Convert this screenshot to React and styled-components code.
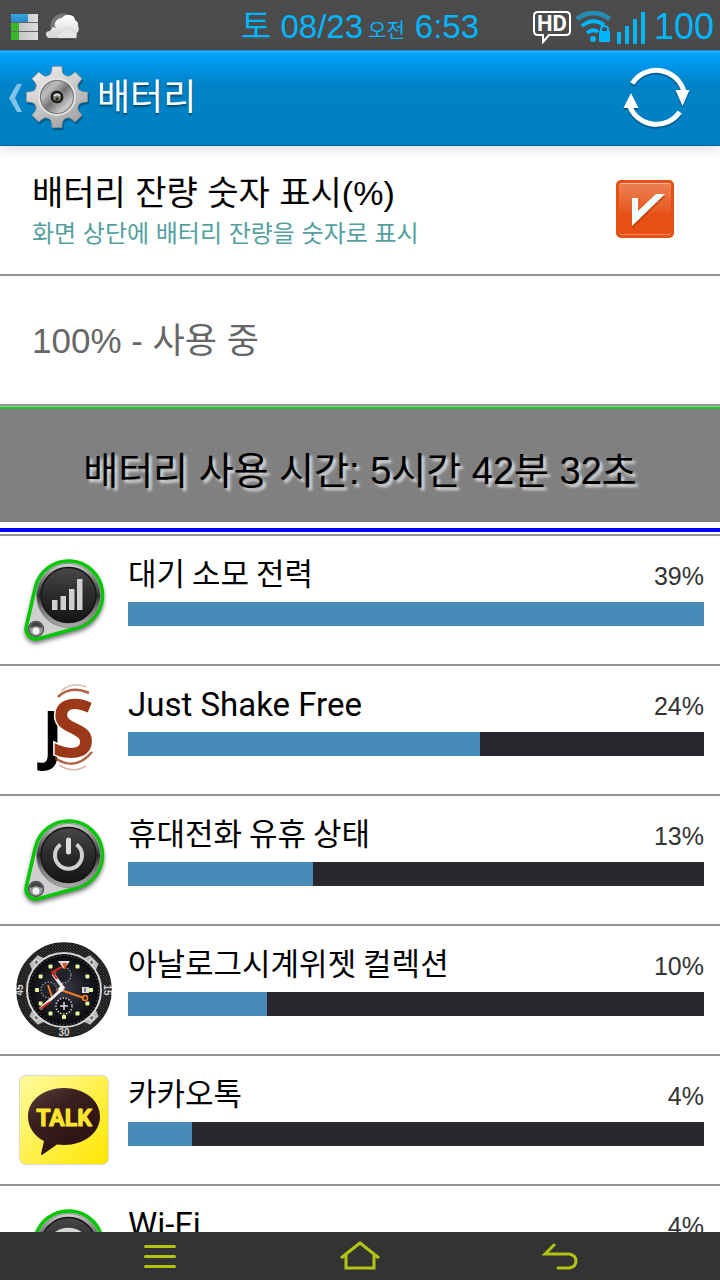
import React, { useState } from "react";
import styled, { createGlobalStyle } from "styled-components";

const HANGUL = '"Noto Sans CJK KR", sans-serif';

const GlobalStyle = createGlobalStyle`
  *, *::before, *::after { box-sizing: border-box; }
  html, body, #root { height: 100%; }
  body {
    margin: 0;
    background: #fff;
    color: #000;
    font-family: "Liberation Sans", ${HANGUL};
  }
`;

const Screen = styled.div`
  display: flex;
  flex-direction: column;
  height: 100vh;
  overflow: hidden;
`;

/* ---------- status bar ---------- */

const StatusBar = styled.header`
  flex: none;
  display: grid;
  grid-template-columns: 1fr auto 1fr;
  align-items: center;
  height: 50px;
  padding: 0 6px;
  background: #4b4b4b;
  color: #00b7ff;
`;

const StatusGroup = styled.div`
  display: flex;
  align-items: center;
  justify-content: ${(p) => (p.$end ? "flex-end" : "flex-start")};
  gap: ${(p) => (p.$end ? "5px" : "8px")};
  padding-left: 4px;
`;

const Clock = styled.time`
  display: flex;
  align-items: baseline;
  padding-top: 4px;
  font-size: 33px;
  line-height: 46px;
  white-space: pre;
`;

const Meridiem = styled.span`
  margin: 0 10px 0 5px;
  font-size: 20px;
`;

const BatteryLevel = styled.span`
  margin-left: 3px;
  font-size: 36px;
  line-height: 50px;
`;

/* ---------- app bar ---------- */

const AppBar = styled.div`
  flex: none;
  position: relative;
  z-index: 1;
  display: flex;
  align-items: center;
  justify-content: space-between;
  height: 96px;
  padding: 0 28px 0 7px;
  border-top: 1px solid #1b8ed2;
  border-bottom: 1px solid #00679f;
  background: linear-gradient(#2fb4ff 0, #00a0fa 3px, #0098ee 12px, #0082c6 34px, #0080c3 100%);
  box-shadow: 0 2px 12px rgba(0, 0, 0, 0.16);
`;

const IconButton = styled.button`
  display: flex;
  align-items: center;
  justify-content: center;
  flex: ${(p) => (p.$grow ? 1 : "none")};
  gap: 2px;
  height: 100%;
  padding: 0;
  border: 0;
  background: none;
`;

const TitleGroup = styled.div`
  display: flex;
  align-items: center;
  gap: 6px;
  height: 100%;
`;

const Title = styled.h1`
  margin: 0;
  color: #fff;
  font-family: "Liberation Sans", ${HANGUL};
  font-size: 36px;
  font-weight: 400;
  line-height: 48px;
  text-shadow: 0 2px 2px rgba(0, 0, 0, 0.45);
`;

/* ---------- settings ---------- */

const Content = styled.main`
  flex: 1;
  min-height: 0;
  overflow-y: auto;
  scrollbar-width: none;
`;

const SettingRow = styled.label`
  display: flex;
  align-items: center;
  justify-content: space-between;
  height: 130px;
  padding: 0 46px 2px 32px;
  border-bottom: 2px solid #969496;
`;

const SettingText = styled.span`
  padding-top: 4px;
`;

const SettingTitle = styled.span`
  display: block;
  font-size: 34px;
  line-height: 46px;
`;

const SettingHint = styled.span`
  display: block;
  color: #54a0a0;
  font-size: 24px;
  line-height: 36px;
`;

const StateText = styled.p`
  margin: 0;
  padding-top: 4px;
  color: #666;
  font-size: 35px;
  line-height: 48px;
`;

const CheckFrame = styled.span`
  display: grid;
  flex: none;
  > * { grid-area: 1 / 1; }
  > svg { pointer-events: none; }
`;

const CheckInput = styled.input`
  appearance: none;
  width: 58px;
  height: 58px;
  margin: 0;
  border: 3px solid #e65014;
  border-radius: 5px;
  background: linear-gradient(#ec8154, #e65a20 55%, #e65014 60%);
  box-shadow: inset 0 1px 0 #f6b99e, inset 0 -1px 0 #f08e64;
`;

const Banner = styled.section`
  padding-bottom: 6px;
  border-bottom: 4px solid #0000fa;
  background: #fff;
`;

const BannerText = styled.p`
  display: flex;
  align-items: center;
  justify-content: center;
  height: 116px;
  margin: 0;
  padding-top: 14px;
  background: linear-gradient(#6cf06c 0 1px, #38bc38 1px 3px, #808080 3px);
  font-size: 38px;
  line-height: 48px;
  text-shadow: 3px 3px 3px #e0e0e0;
`;

/* ---------- usage list ---------- */

const UsageList = styled.ul`
  margin: 2px 0 0;
  padding: 0;
  border-top: 2px solid #969496;
  list-style: none;
`;

const UsageRow = styled.li`
  display: flex;
  gap: 16px;
  height: 130px;
  padding: 16px;
  border-bottom: 2px solid #969496;
`;

const UsageBody = styled.div`
  flex: 1;
  min-width: 0;
`;

const UsageHeader = styled.div`
  display: flex;
  align-items: flex-start;
  justify-content: space-between;
  height: 44px;
  margin-bottom: 6px;
`;

const UsageName = styled.span`
  font-family: ${(p) => (p.$latin ? "Roboto, sans-serif" : HANGUL)};
  font-size: ${(p) => (p.$latin ? "33px" : "31px")};
  line-height: ${(p) => (p.$latin ? "46px" : "40px")};
`;

const UsagePercent = styled.span`
  color: #333;
  font-size: 25px;
  line-height: 48px;
`;

const Track = styled.div`
  height: 24px;
  background: #29262d;
`;

const Fill = styled.div`
  height: 100%;
  background: #468ab7;
`;

const NavBar = styled.nav`
  flex: none;
  display: flex;
  height: 48px;
  padding: 0 60px;
  background: #333;
`;

/* ---------- icons ---------- */

const MemoryIcon = () => (
  <svg width="28" height="28" viewBox="0 0 28 28">
    <defs>
      <linearGradient id="memGrey" x2="1" y2="0"><stop stopColor="#b9b9b9" /><stop offset="1" stopColor="#dedede" /></linearGradient>
      <linearGradient id="memBlue" x2="0" y2="1"><stop stopColor="#36a7e4" /><stop offset="1" stopColor="#2b87c9" /></linearGradient>
    </defs>
    <path d="M1 1h27v8H1zM1 10h27v8H1zM1 19h27v8H1z" fill="url(#memGrey)" />
    <path d="M1 1h17v8H1z" fill="url(#memBlue)" />
    <path d="M1 10h8v8H1zM1 19h8v8H1z" fill="#3bb52a" />
    <path d="M1 9.500h27M1 18.500h27" stroke="#666" strokeWidth="1" />
  </svg>
);

const CloudIcon = () => (
  <svg width="34" height="30" viewBox="0 0 34 30">
    <defs>
      <linearGradient id="cloud" x2="0" y2="1"><stop stopColor="#fff" /><stop offset="1" stopColor="#d5d5d5" /></linearGradient>
    </defs>
    <circle cx="17" cy="14" r="12.500" fill="#77787c" />
    <path d="M11 26c5 3 14 3 19 0z" fill="#333" />
    <path d="M3 26q-3-1-3-4 0-3 4-3l3-4 3 1q-3-5 1-8 2-2 5-2 3-4 8-3 5 1 5 5 4 2 3 6 2 4-1 7l-2 5z" fill="url(#cloud)" />
    <path d="M12 26q-2-5 4-6 1-5 6-4 4 0 5 4 5 1 3 6z" fill="#e6e6e6" stroke="#cfcfcf" strokeWidth=".6" />
  </svg>
);

const HdIcon = () => (
  <svg width="38" height="34" viewBox="0 0 38 34">
    <path d="M5 2h28q4 0 4 4v15q0 4-4 4H16l-6 7v-7H5q-4 0-4-4V6q0-4 4-4z" fill="none" stroke="#fff" strokeWidth="2" />
    <text x="19" y="21" textAnchor="middle" fontFamily="Roboto" fontWeight="700" fontSize="22" fill="#fff">HD</text>
  </svg>
);

const WifiIcon = () => (
  <svg width="35" height="32" viewBox="0 0 35 32">
    <path d="M1 8Q17-4 34 8" fill="none" stroke="#258bb3" strokeWidth="5" />
    <path d="M6 15Q17 6 28 14M11 22q6-5 11-1" fill="none" stroke="#00b7ff" strokeWidth="4" />
    <circle cx="17" cy="28" r="3" fill="#00b7ff" />
    <path d="M23 20h11v11H23z" fill="#00b7ff" />
    <path d="M25 20v-2q0-3 3.500-3t3.500 3v2" fill="none" stroke="#00b7ff" strokeWidth="2" />
  </svg>
);

const SignalIcon = () => (
  <svg width="30" height="34" viewBox="0 0 30 34">
    <path d="M1 22h4v12H1zM9 16h4v18H9zM17 9h4v25h-4zM25 2h4v32h-4z" fill="#00b7ff" />
  </svg>
);

const GEAR_PATH = Array.from({ length: 8 }, (_, i) => {
  const at = (deg, r) => {
    const a = ((i * 45 + deg - 90) * Math.PI) / 180;
    return `${(32 + r * Math.cos(a)).toFixed(1)} ${(32 + r * Math.sin(a)).toFixed(1)}`;
  };
  return `${i ? "L" : "M"}${at(-15, 24)}L${at(-12, 26)}L${at(-9, 31)}L${at(9, 31)}L${at(12, 26)}L${at(15, 24)}Q${at(22, 22)} ${at(30, 24)}`;
}).join("") + "Z";

const GearIcon = () => (
  <svg width="66" height="66" viewBox="0 0 66 66">
    <defs>
      <linearGradient id="gear" x2="0.6" y2="1"><stop stopColor="#f5f5f5" /><stop offset=".5" stopColor="#cfcfcf" /><stop offset="1" stopColor="#a5a5a5" /></linearGradient>
      <linearGradient id="gearHub" x2="1" y2="1"><stop stopColor="#777" /><stop offset=".3" stopColor="#bdbdbd" /><stop offset=".5" stopColor="#737373" /><stop offset=".75" stopColor="#c9c9c9" /><stop offset="1" stopColor="#888" /></linearGradient>
    </defs>
    <path d={GEAR_PATH} transform="translate(1 2)" fill="#013e60" opacity=".6" stroke="#013e60" strokeWidth="1" />
    <path d={GEAR_PATH} fill="url(#gear)" stroke="#8e9296" strokeWidth=".8" />
    <circle cx="32" cy="32" r="18" fill="url(#gearHub)" stroke="#e9e9e9" strokeWidth="1.500" />
    <circle cx="32" cy="32" r="16.500" fill="none" stroke="#777" strokeWidth="1" />
    <circle cx="32" cy="32" r="7" fill="#1c1c1c" stroke="#a7a7a7" strokeWidth="1" />
    <circle cx="32" cy="32" r="4" fill="#817a6c" />
    <path d="M29 31q3-3 6 0" fill="none" stroke="#eee" strokeWidth="1.500" />
    <circle cx="32" cy="34" r="1.500" fill="#222" />
  </svg>
);

const BackChevron = () => (
  <svg width="16" height="30" viewBox="0 0 16 30">
    <path d="M15 1H10L2 15l8 14h5L8 15z" fill="#7fc4e8" />
  </svg>
);

const RefreshIcon = () => (
  <svg width="70" height="66" viewBox="0 0 70 66">
    <defs>
      <g id="cycle">
        <path d="M10.300 18.500A28.500 28.500 0 0 1 62 27M8 42A28.500 28.500 0 0 0 57.700 47" fill="none" strokeWidth="5" />
        <path d="M53.500 25h14l-7 16zM9 28l7.500 15h-15z" stroke="none" />
      </g>
    </defs>
    <use href="#cycle" y="2" stroke="#00466e" fill="#00466e" opacity=".6" />
    <use href="#cycle" stroke="#fff" fill="#fff" />
  </svg>
);

const CheckMark = () => (
  <svg width="58" height="58" viewBox="0 0 58 58">
    <path d="M16 20h6v13L40 16h10L16 49z" fill="#b33505" opacity=".55" />
    <path d="M16 18h6v13L40 14h9L16 46z" fill="#f0ffff" />
  </svg>
);

const Knob = ({ id, children }) => (
  <svg width="96" height="96" viewBox="0 0 96 96">
    <defs>
      <linearGradient id={`${id}Rim`} x2="0" y2="1"><stop stopColor="#d8d8d8" /><stop offset=".2" stopColor="#8a8a8a" /><stop offset=".5" stopColor="#2e2e2e" /><stop offset=".7" stopColor="#777" /><stop offset="1" stopColor="#a9a9a9" /></linearGradient>
      <linearGradient id={`${id}Face`} x2="0" y2="1"><stop stopColor="#474747" /><stop offset=".5" stopColor="#2b2b2b" /><stop offset="1" stopColor="#141414" /></linearGradient>
      <filter id={`${id}Blur`} x="-20%" y="-20%" width="140%" height="140%"><feGaussianBlur stdDeviation="2" /></filter>
    </defs>
    <path d="M19.400 35.300A34 34 0 1 1 61.700 75.700L22.700 86.600A10 10 0 0 1 10.300 74.700Z" transform="translate(0 3)" fill="#333" stroke="#444" strokeWidth="3" opacity=".7" filter={`url(#${id}Blur)`} />
    <path d="M19.400 35.300A34 34 0 1 1 61.700 75.700L22.700 86.600A10 10 0 0 1 10.300 74.700Z" fill="#cfcfcf" stroke="#00c800" strokeWidth="3.500" />
    <circle cx="52.500" cy="43.500" r="32" fill={`url(#${id}Rim)`} stroke="#8b8b8b" strokeWidth="1" />
    <circle cx="52.500" cy="43" r="27.500" fill={`url(#${id}Face)`} stroke="#151515" strokeWidth="1.500" />
    <circle cx="20" cy="77" r="7.500" fill="#999" stroke="#555" strokeWidth="1.500" />
    <path d="M14 76a6 6 0 0 1 12 0l-6-2z" fill="#444" />
    <circle cx="20" cy="79" r="3.500" fill="#f2f2f2" />
    {children}
  </svg>
);

const StandbyIcon = () => (
  <Knob id="standby">
    <path d="M36 48h5.500v10H36zM44.500 44h5.500v14h-5.500zM53 37h5.500v21H53zM61 27h5.500v31H61z" fill="#d0d0d0" />
  </Knob>
);

const IdleIcon = () => (
  <Knob id="idle">
    <path d="M44.500 32.500a13.500 13.500 0 1 0 16 0" fill="none" stroke="#d0d0d0" strokeWidth="4" />
    <path d="M52.500 28v12" fill="none" stroke="#dcdcdc" strokeWidth="5" strokeLinecap="round" />
  </Knob>
);

const WifiAppIcon = () => (
  <Knob id="wifi">
    <path d="M34 38q18-18 37 0M41 46q12-10 23 0" fill="none" stroke="#d8d8d8" strokeWidth="6" />
    <circle cx="52.500" cy="56" r="4" fill="#d8d8d8" />
  </Knob>
);

const ShakeIcon = () => (
  <svg width="96" height="96" viewBox="0 0 96 96" fontFamily="Open Sans" fontWeight="700">
    <text x="26" y="75" fontSize="64" fill="#000">J</text>
    <text x="35" y="75" fontSize="80" fill="#9a3817" stroke="#fff" strokeWidth="3" paintOrder="stroke">S</text>
    <g fill="none" stroke="#9c3e1c">
      <path d="M45 9q12-10 25-4M43 83q14 9 27 1" strokeWidth="1.500" opacity=".35" />
      <path d="M42 15q12-12 31-4M39 76q20 14 37-6" strokeWidth="2.500" opacity=".8" />
    </g>
  </svg>
);

const polar = (deg, r) => {
  const a = ((deg - 90) * Math.PI) / 180;
  return [48 + r * Math.cos(a), 48 + r * Math.sin(a)];
};

const WatchIcon = () => (
  <svg width="96" height="96" viewBox="0 0 96 96">
    <defs>
      <pattern id="carbon" width="3" height="3" patternUnits="userSpaceOnUse">
        <path d="M0 0h3v3H0z" fill="#1d1d1d" /><path d="M0 0h1v1H0zM1.500 1.500h1v1h-1z" fill="#4a4a4a" />
      </pattern>
      <radialGradient id="dial"><stop stopColor="#3a3a48" /><stop offset="1" stopColor="#08080c" /></radialGradient>
    </defs>
    <circle cx="48" cy="48" r="47" fill="url(#carbon)" stroke="#222" strokeWidth="1.500" />
    {[45, 135, 225, 315].map((d) => (
      <g key={d} transform={`rotate(${d} 48 48)`}>
        <path d="M39 13l3-8h12l3 8z" fill="#b9b9b9" />
        <circle cx="48" cy="9" r="2.500" fill="#777" stroke="#eee" strokeWidth="1" />
      </g>
    ))}
    <circle cx="48" cy="48" r="37" fill="url(#dial)" stroke="#d5d5d5" strokeWidth="2" />
    <circle cx="48" cy="48" r="34.500" fill="none" stroke="#555" strokeWidth="1.500" strokeDasharray="1 2.600" />
    {[30, 60, 90, 120, 150, 180, 210, 240, 270, 300, 330].map((d) => {
      const [x, y] = polar(d, 27);
      return <rect key={d} x={x - 2} y={y - 2} width="4" height="4" rx="1" fill="#e4ff9c" />;
    })}
    <circle cx="47" cy="33" r="8" fill="#23232a" stroke="#8a8a90" strokeWidth="1.500" strokeDasharray="1.500 1.500" />
    <circle cx="33" cy="48" r="8" fill="#23232a" stroke="#8a8a90" strokeWidth="1.500" strokeDasharray="1.500 1.500" />
    <circle cx="48" cy="64" r="8" fill="#111116" stroke="#d0d0d0" strokeWidth="1.500" strokeDasharray="1.500 1.500" />
    <path d="M44 64h8M48 60v8" stroke="#ddd" strokeWidth="1.500" />
    <rect x="66" y="45" width="7" height="6" fill="#ddd" /><path d="M69 46v4" stroke="#222" strokeWidth="1" />
    <path d="M42 19h12l-6 8z" fill="#ddd" /><path d="M46 21h5l-2 7z" fill="#e1501e" />
    <path d="M32 43l4 12" stroke="#f57c1e" strokeWidth="2" />
    <path d="M45 48L24 67M48 47L37 32" stroke="#eee" strokeWidth="3" />
    <path d="M34 60L24 67M41 37l-5-7 10-5" fill="none" stroke="#d42416" strokeWidth="2" />
    <path d="M42 47l26 9" stroke="#f57c1e" strokeWidth="2" />
    <circle cx="69" cy="56" r="2.500" fill="none" stroke="#f57c1e" strokeWidth="1.500" />
    <circle cx="45" cy="47" r="2.500" fill="#f4f4f4" />
    <g fontFamily="Liberation Sans" fontWeight="700" fontSize="10" fill="#d2d2d2" textAnchor="middle">
      <text x="48" y="94">30</text>
      <text transform="translate(7 48) rotate(-90)">45</text>
      <text transform="translate(88 48) rotate(90)">15</text>
    </g>
  </svg>
);

const TalkIcon = () => (
  <svg width="96" height="96" viewBox="0 0 96 96">
    <defs>
      <linearGradient id="talkBg" x2="1" y2="1"><stop stopColor="#fffba0" /><stop offset=".5" stopColor="#fff04e" /><stop offset="1" stopColor="#ffe600" /></linearGradient>
      <linearGradient id="talkBubble" x2=".7" y2="1"><stop stopColor="#57403d" /><stop offset=".4" stopColor="#391f1e" /><stop offset="1" stopColor="#2a1010" /></linearGradient>
    </defs>
    <rect x="3.500" y="3.500" width="89" height="89" rx="6" fill="url(#talkBg)" stroke="#d9d9d0" />
    <path d="M48 16c20 0 36 12 36 28.500S68 73 48 73l-7-.500L26 83q-1 0-1-1l3-13C18 64 12 55 12 44.500 12 28 28 16 48 16z" fill="url(#talkBubble)" />
    <text x="48" y="54" textAnchor="middle" fontFamily="Roboto" fontWeight="700" fontSize="23" fill="#ffe62e" stroke="#ffe62e" strokeWidth="1" strokeLinejoin="round">TALK</text>
  </svg>
);

const MenuIcon = () => (
  <svg width="34" height="26" viewBox="0 0 34 26" fill="none" stroke="#b1c411" strokeWidth="3" strokeLinecap="round">
    <path d="M2.500 3.500h29M2.500 13.500h29M2.500 23.500h29" />
  </svg>
);

const HomeIcon = () => (
  <svg width="40" height="30" viewBox="0 0 40 30" fill="none" stroke="#b1c411" strokeWidth="3">
    <path d="M1 17L20 2l19 15M6 13.500V27h28V13.500" />
  </svg>
);

const ReturnIcon = () => (
  <svg width="36" height="30" viewBox="0 0 36 30" fill="none" stroke="#b1c411" strokeWidth="3" strokeLinecap="round">
    <path d="M12 4L3 13h24q7 1 7 7t-7 7H16" />
  </svg>
);

const USAGE = [
  { name: "대기 소모 전력", percent: 39, fill: 100, Icon: StandbyIcon },
  { name: "Just Shake Free", latin: true, percent: 24, fill: 61.1, Icon: ShakeIcon },
  { name: "휴대전화 유휴 상태", percent: 13, fill: 32.1, Icon: IdleIcon },
  { name: "아날로그시계위젯 컬렉션", percent: 10, fill: 24.1, Icon: WatchIcon },
  { name: "카카오톡", percent: 4, fill: 11.1, Icon: TalkIcon },
  { name: "Wi-Fi", latin: true, percent: 4, fill: 11.1, Icon: WifiAppIcon },
];

export default function App() {
  const [showLevel, setShowLevel] = useState(true);

  return (
    <Screen>
      <GlobalStyle />
      <StatusBar>
        <StatusGroup>
          <MemoryIcon />
          <CloudIcon />
        </StatusGroup>
        <Clock>
          토 08/23<Meridiem>오전</Meridiem>6:53
        </Clock>
        <StatusGroup $end>
          <HdIcon />
          <WifiIcon />
          <SignalIcon />
          <BatteryLevel>100</BatteryLevel>
        </StatusGroup>
      </StatusBar>

      <AppBar>
        <TitleGroup>
          <IconButton type="button" aria-label="뒤로">
            <BackChevron />
            <GearIcon />
          </IconButton>
          <Title>배터리</Title>
        </TitleGroup>
        <IconButton type="button" aria-label="새로고침">
          <RefreshIcon />
        </IconButton>
      </AppBar>

      <Content>
        <SettingRow htmlFor="level">
          <SettingText>
            <SettingTitle>배터리 잔량 숫자 표시(%)</SettingTitle>
            <SettingHint>화면 상단에 배터리 잔량을 숫자로 표시</SettingHint>
          </SettingText>
          <CheckFrame>
            <CheckInput id="level" type="checkbox" checked={showLevel} onChange={(e) => setShowLevel(e.target.checked)} />
            {showLevel && <CheckMark />}
          </CheckFrame>
        </SettingRow>
        <SettingRow as="div">
          <StateText>100% - 사용 중</StateText>
        </SettingRow>
        <Banner>
          <BannerText>배터리 사용 시간: 5시간 42분 32초</BannerText>
        </Banner>
        <UsageList>
          {USAGE.map(({ name, latin, percent, fill, Icon }) => (
            <UsageRow key={name}>
              <Icon />
              <UsageBody>
                <UsageHeader>
                  <UsageName $latin={latin}>{name}</UsageName>
                  <UsagePercent>{percent}%</UsagePercent>
                </UsageHeader>
                <Track role="progressbar" aria-label={name} aria-valuenow={percent}>
                  <Fill style={{ width: `${fill}%` }} />
                </Track>
              </UsageBody>
            </UsageRow>
          ))}
        </UsageList>
      </Content>

      <NavBar>
        <IconButton type="button" $grow aria-label="메뉴"><MenuIcon /></IconButton>
        <IconButton type="button" $grow aria-label="홈"><HomeIcon /></IconButton>
        <IconButton type="button" $grow aria-label="이전"><ReturnIcon /></IconButton>
      </NavBar>
    </Screen>
  );
}
